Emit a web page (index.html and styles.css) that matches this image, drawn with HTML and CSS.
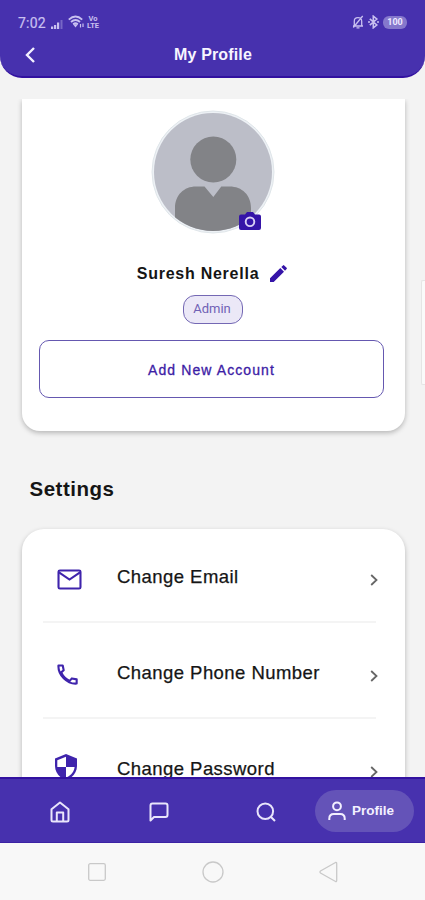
FILE: index.html
```html
<!DOCTYPE html>
<html lang="en">
<head>
<meta charset="utf-8">
<meta name="viewport" content="width=device-width, initial-scale=1">
<title>My Profile</title>
<link rel="stylesheet" href="styles.css">
</head>
<body>
<header class="header">
  <div class="status">
    <span class="time">7:02</span>
    <svg class="signal" width="12" height="10" viewBox="0 0 12 10"><path d="M0 7.500h2.200V10H0zM3 6h2.200v4H3zM6 3.500h2.200V10H6z" fill="#c9c0f0"/><path d="M9.500 1h2v9h-2z" fill="#7767c5"/></svg>
    <svg class="wifi" width="17" height="14" viewBox="0 0 17 14" fill="none" stroke="#c9c0f0" stroke-width="1.900"><path d="M.8 4.600Q7.500-1.600 14.200 4.600M3 7Q7.500 3 12 7M5.200 9.300Q7.500 7.300 9.800 9.300"/><path d="M5 9.300h5L7.500 12.500z" fill="#c9c0f0" stroke="none"/><path d="M12.500 12.500V9M15 8.500V12" stroke-width="1.200"/></svg>
    <span class="volte"><span>Vo</span><span>LTE</span></span>
    <span class="status-right">
      <svg width="12" height="14" viewBox="0 0 12 14" fill="none" stroke="#c9c0f0" stroke-width="1.300"><path d="M1 11h10M2.300 11V6.200C2.300 1.500 9.700 1.500 9.700 6.200V11M4.500 12.800h3M1.300 12.500L10.700 1"/></svg>
      <svg width="11" height="14" viewBox="0 0 11 14" fill="none" stroke="#c9c0f0" stroke-width="1.600"><path d="M1.800 3.800l7 6.200-3.500 2.800V1.200L8.800 4l-7 6.200M0 7h2M9 7h2"/></svg>
      <span class="battery">100</span>
    </span>
  </div>
  <div class="titlebar">
    <svg class="back" width="12" height="18" viewBox="0 0 12 18" fill="none" stroke="#f3f0ff" stroke-width="2.400"><path d="M10 2L3 9l7 7"/></svg>
    <h1 class="title">My Profile</h1>
  </div>
</header>

<main class="content">
  <section class="card profile">
    <div class="avatar">
      <svg class="portrait" width="124" height="124" viewBox="0 0 124 124">
        <defs><clipPath id="round"><circle cx="62" cy="62" r="59"/></clipPath></defs>
        <circle cx="62" cy="62" r="61" fill="#edf1f5" stroke="#dfe5e9"/>
        <g clip-path="url(#round)">
          <path d="M0 0h124v124H0z" fill="#bcbec8"/>
          <circle cx="62.300" cy="49.500" r="23" fill="#828387"/>
          <path d="M24 124V98c0-13 9-21.500 21-21.500h8.500L62.300 87l8-10.500h8.200C91 76.500 100 85 100 98v26z" fill="#828387"/>
        </g>
      </svg>
      <svg class="camera" width="22" height="18" viewBox="0 0 22 18"><path d="M2 2.500h4L8 0h6l2 2.500h4q2 0 2 2V16q0 2-2 2H2q-2 0-2-2V4.500q0-2 2-2z" fill="#3514a8"/><circle cx="11" cy="9.800" r="4.300" fill="none" stroke="#d9cff5" stroke-width="1.900"/></svg>
    </div>
    <div class="name-row">
      <h2 class="name">Suresh Nerella</h2>
      <svg width="18" height="18" viewBox="0 0 18 18" fill="#3514a8"><path d="M1 13.300L11.300 3l3.700 3.700L4.700 17H1zM12.300 2L14 .4q.6-.6 1.200 0l2.400 2.400q.6.6 0 1.200L16 5.700z"/></svg>
    </div>
    <span class="badge">Admin</span>
    <button class="add">Add New Account</button>
  </section>

  <h2 class="section-title">Settings</h2>

  <section class="card settings">
    <div class="row">
      <span class="row-icon"><svg width="25" height="21" viewBox="0 0 26 22" fill="none" stroke="#3f24ac" stroke-width="2.200"><rect x="1.500" y="1.500" width="23" height="19" rx="1.500"/><path d="M2 3.500l11 7.500 11-7.500"/></svg></span>
      <span class="label">Change Email</span>
      <svg class="chevron" width="8" height="12" viewBox="0 0 8 12"><path d="M1.200 1L6.500 6l-5.300 5"/></svg>
    </div>
    <div class="row">
      <span class="row-icon phone"><svg width="21" height="21" viewBox="0 0 22 22" fill="none" stroke="#3f24ac" stroke-width="2.200" stroke-linejoin="round"><path d="M1.500 1.500H6l1 5-2.600 2.300c2 4.300 4.600 6.900 8.900 8.900l2.300-2.600 5 1v4.400C10.500 21.300 1 11.500 1.500 1.500z"/></svg></span>
      <span class="label">Change Phone Number</span>
      <svg class="chevron" width="8" height="12" viewBox="0 0 8 12"><path d="M1.200 1L6.500 6l-5.300 5"/></svg>
    </div>
    <div class="row">
      <span class="row-icon shield"><svg width="22" height="26" viewBox="0 0 22 26"><path d="M11 0l11 4.500V12c0 6.500-4.600 12-11 14C4.600 24 0 18.500 0 12V4.500z" fill="#3f24ac"/><path d="M11 2.800V13H2.300V6.200zM11 13h8.600c-.6 5-4 9-8.600 10.500z" fill="#fff"/></svg></span>
      <span class="label">Change Password</span>
      <svg class="chevron" width="8" height="12" viewBox="0 0 8 12"><path d="M1.200 1L6.500 6l-5.300 5"/></svg>
    </div>
  </section>
  <div class="edge-handle"></div>
</main>

<nav class="nav">
  <svg class="nav-home" width="20" height="22" viewBox="0 0 20 22" fill="none" stroke="#e9e5fb" stroke-width="2" stroke-linejoin="round"><path d="M1.500 8.300L10 1.500l8.500 6.800V19q0 1.500-1.500 1.500H3q-1.500 0-1.500-1.500z"/><path d="M6.800 20.500V11.500h6.400v9"/></svg>
  <svg class="nav-chat" width="20" height="20" viewBox="0 0 20 20" fill="none" stroke="#e9e5fb" stroke-width="2" stroke-linejoin="round"><path d="M1.500 18.500v-15q0-2 2-2h13q2 0 2 2V13q0 2-2 2H5z"/></svg>
  <svg class="nav-search" width="20" height="20" viewBox="0 0 20 20" fill="none" stroke="#e9e5fb" stroke-width="2"><circle cx="9.300" cy="9.300" r="7.800"/><path d="M14.700 14.700L19 19"/></svg>
  <span class="nav-profile">
    <svg width="18" height="20" viewBox="0 0 18 20" fill="none" stroke="#f3f0ff" stroke-width="2"><circle cx="9" cy="5.300" r="3.900"/><path d="M1.300 19v-1.500q0-4.500 4.500-4.500h6.400q4.500 0 4.500 4.500V19"/></svg>
    Profile
  </span>
</nav>
<footer class="system">
  <svg width="18" height="18" viewBox="0 0 18 18"><rect x=".7" y=".7" width="16.600" height="16.600" rx="1.500"/></svg>
  <svg width="22" height="22" viewBox="0 0 22 22"><circle cx="11" cy="11" r="10"/></svg>
  <svg width="19" height="22" viewBox="0 0 19 22"><path d="M16.500 1.500L1.500 10q-1 1 0 2l15 8.500q1.200.3 1.200-1V2.500q0-1.300-1.200-1z"/></svg>
</footer>
</body>
</html>
```

FILE: styles.css
```css
* { box-sizing: border-box; }
body {
  margin: 0;
  width: 425px;
  height: 900px;
  display: flex;
  flex-direction: column;
  overflow: hidden;
  background: #f3f3f3;
  font-family: "Liberation Sans", Arial, sans-serif;
  color: #151515;
}
h1, h2 { margin: 0; }
svg { display: block; flex: none; }

.header {
  flex: none;
  height: 78px;
  background: #4731ae;
  border-bottom: 2px solid #3211a0;
  border-radius: 0 0 22px 22px;
}
.status {
  display: flex;
  align-items: center;
  height: 44px;
  padding: 0 18px;
  color: #c9c0f0;
}
.time {
  width: 33px;
  margin-top: 2px;
  font: 14px/16px Roboto, sans-serif;
  letter-spacing: .2px;
  -webkit-text-stroke: .2px #c9c0f0;
}
.signal { margin-top: 3px; }
.wifi { margin-left: 5px; }
.volte {
  display: flex;
  flex-direction: column;
  align-items: center;
  margin-left: 2px;
  font: bold 7.500px/8px Roboto, sans-serif;
}
.volte span:last-child { margin-top: -1px; }
.status-right {
  display: flex;
  align-items: center;
  gap: 4px;
  margin-left: auto;
}
.battery {
  width: 24px;
  height: 13px;
  border-radius: 6px;
  background: #8578cc;
  color: #eeeaff;
  font: bold 9px/13px Roboto, sans-serif;
  text-align: center;
}
.titlebar {
  display: grid;
  grid-template-columns: 36px 1fr 36px;
  align-items: center;
  height: 21px;
}
.back { margin-left: 24px; }
.title {
  margin-left: 1px;
  font-size: 16px;
  line-height: 20px;
  letter-spacing: .15px;
  text-align: center;
  color: #f7f5ff;
}

.content {
  flex: none;
  position: relative;
  height: 699px;
  padding: 21px 20px 0 21.500px;
  overflow: hidden;
}
.card {
  background: #fff;
  box-shadow: 0 2px 5px rgba(0, 0, 0, .25);
}
.profile {
  height: 332px;
  padding: 11px 21px 0 17.500px;
  border-radius: 0 0 18px 18px;
  clip-path: inset(0 -10px -12px -10px);
  display: flex;
  flex-direction: column;
  align-items: center;
}
.avatar { position: relative; margin-left: 2px; }
.camera { position: absolute; right: 14px; bottom: 4px; }
.name-row {
  display: flex;
  align-items: center;
  gap: 10px;
  margin-top: 30px;
  margin-left: 1px;
  height: 20px;
}
.name {
  font-size: 16px;
  line-height: 20px;
  letter-spacing: .75px;
}
.badge {
  width: 60px;
  height: 29px;
  margin-top: 11px;
  margin-left: 3px;
  border: 1.500px solid #7468b4;
  border-radius: 12px;
  background: #ebe8f7;
  color: #7061b5;
  font: 13px/26px Roboto, sans-serif;
  padding-right: 2px;
  text-align: center;
}
.add {
  width: 345px;
  height: 58px;
  margin-top: 16px;
  padding: 2px 0 0;
  border: 1px solid #6558b0;
  border-radius: 10px;
  background: #fff;
  color: #3c20a5;
  font: 14px "Liberation Sans", Arial, sans-serif;
  letter-spacing: 1.100px;
  -webkit-text-stroke: .3px #3c20a5;
}
.section-title {
  margin: 46px 0 0 8px;
  font-size: 20.500px;
  line-height: 24px;
  letter-spacing: .5px;
}
.settings {
  margin-top: 28px;
  height: 330px;
  padding: 0 29px 0 21px;
  border-radius: 22px;
}
.row {
  display: grid;
  grid-template-columns: 74.500px 1fr auto;
  align-items: center;
  height: 96px;
  padding-top: 10px;
  border-bottom: 2px solid #f4f4f4;
}
.row:first-child { height: 94px; padding-top: 8px; }
.row-icon { padding-left: 14px; }
.row-icon.phone { margin-top: -1px; }
.row-icon.shield { padding-left: 12px; margin-top: -9px; }
.label {
  margin-top: -5px;
  font-size: 18.500px;
  line-height: 24px;
  letter-spacing: .45px;
  -webkit-text-stroke: .25px #151515;
}
.chevron {
  margin-right: -2px;
  margin-top: 1px;
  fill: none;
  stroke: #666;
  stroke-width: 1.800;
}
.edge-handle {
  position: absolute;
  top: 202px;
  right: 0;
  width: 4px;
  height: 105px;
  border: 1px solid #e5e5e5;
  border-right: 0;
  border-radius: 2px 0 0 2px;
  background: #fafafa;
}

.nav {
  flex: none;
  display: flex;
  align-items: center;
  height: 66px;
  padding: 0 11px 0 50px;
  background: #4731ae;
  border-top: 2px solid #3211a0;
  border-bottom: 1px solid #3b22a4;
}
.nav-home { margin-top: 3px; }
.nav-chat { margin-left: 79px; margin-top: 2px; }
.nav-search { margin-left: 87px; margin-top: 3px; }
.nav-profile {
  display: flex;
  align-items: center;
  gap: 6px;
  width: 99px;
  height: 42px;
  margin-left: auto;
  padding-left: 13px;
  border-radius: 21px;
  background: #6453b8;
  color: #f3f0ff;
  font-size: 13.500px;
  font-weight: bold;
}
.system {
  flex: 1;
  display: flex;
  align-items: center;
  justify-content: space-between;
  padding: 1px 87px 0 88px;
  background: #f8f8f8;
  fill: none;
  stroke: #c9c9c9;
  stroke-width: 1.300;
}
```
